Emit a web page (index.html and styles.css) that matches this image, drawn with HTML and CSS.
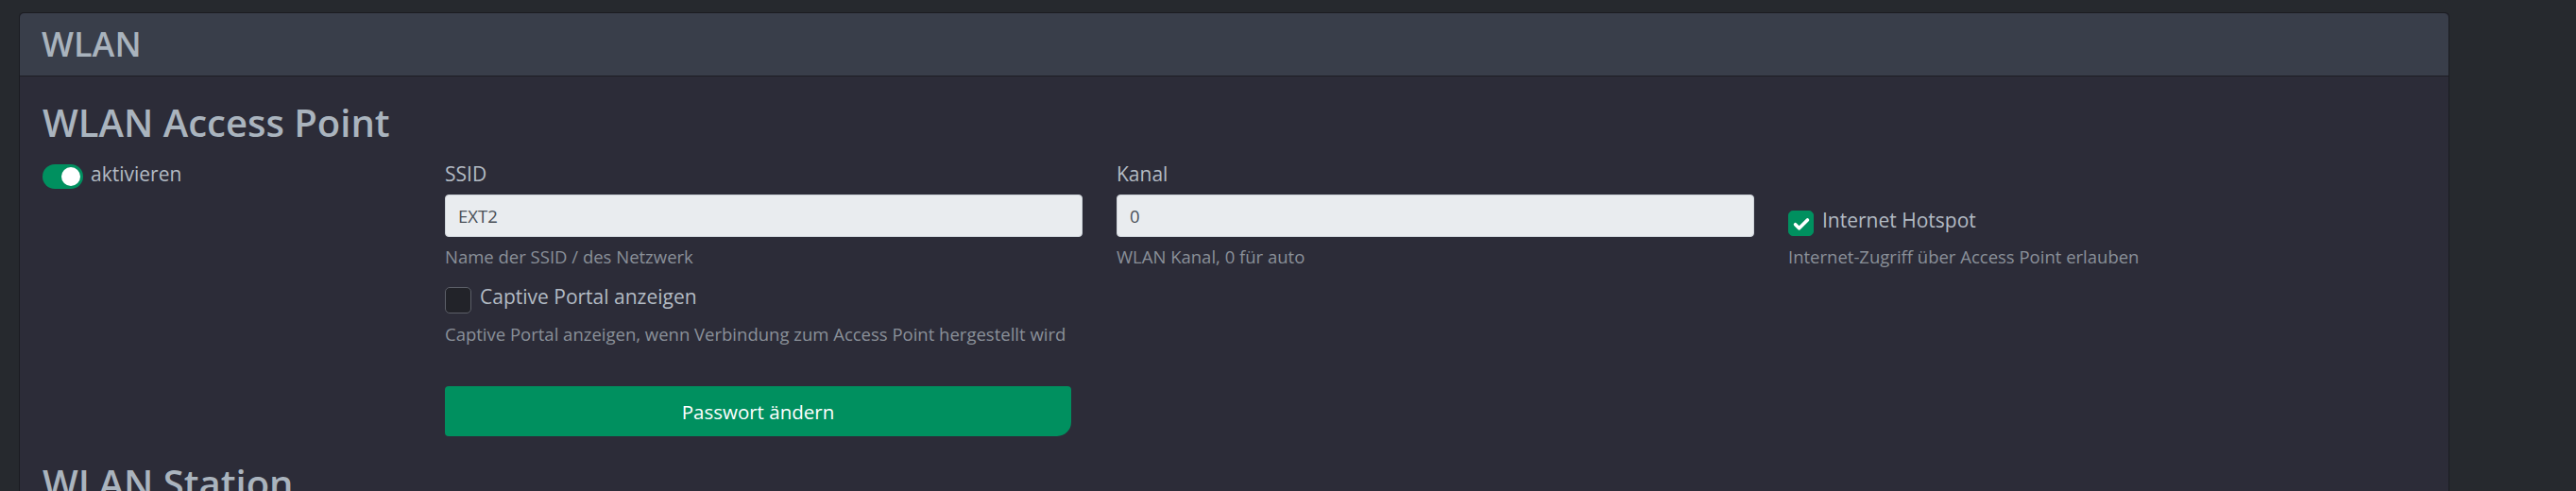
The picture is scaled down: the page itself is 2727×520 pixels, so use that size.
FILE: index.html
```html
<!DOCTYPE html>
<html lang="de">

<head>
    <meta charset="UTF-8">
    <meta name="viewport" content="width=device-width, initial-scale=1.0">
    <title>WLAN</title>
    <link rel="stylesheet" href="styles.css">
</head>

<body>
    <div class="card">
        <div class="card-header">WLAN</div>
        <div class="card-body">
            <h2 class="section-title">WLAN Access Point</h2>
            <div class="form-row">
                <div class="col">
                    <label class="switch">
                        <span class="switch-track"><span class="switch-knob"></span></span>
                        <span class="switch-text">aktivieren</span>
                    </label>
                </div>
                <div class="col">
                    <label class="field-label" for="ssid">SSID</label>
                    <input class="field-input" id="ssid" type="text" value="EXT2">
                    <div class="help">Name der SSID / des Netzwerk</div>

                    <label class="check">
                        <span class="check-box"></span>
                        <span class="check-text">Captive Portal anzeigen</span>
                    </label>
                    <div class="help help-tight">Captive Portal anzeigen, wenn Verbindung zum Access Point hergestellt wird</div>

                    <button class="btn-green" type="button">Passwort ändern</button>
                </div>
                <div class="col">
                    <label class="field-label" for="kanal">Kanal</label>
                    <input class="field-input" id="kanal" type="text" value="0">
                    <div class="help">WLAN Kanal, 0 für auto</div>
                </div>
                <div class="col col-offset">
                    <label class="check">
                        <span class="check-box checked">
                            <svg viewBox="0 0 24 24" width="22" height="22"><path d="M5 12.8l4.4 4.4L19 7.6" fill="none" stroke="#fff" stroke-width="4" stroke-linecap="round" stroke-linejoin="round"/></svg>
                        </span>
                        <span class="check-text">Internet Hotspot</span>
                    </label>
                    <div class="help help-tight">Internet-Zugriff über Access Point erlauben</div>
                </div>
            </div>
            <h2 class="section-title next">WLAN Station</h2>
        </div>
    </div>
</body>

</html>
```

FILE: styles.css
```css
body {
    margin: 0;
    background-color: #26292e;
    font-family: "Open Sans", "Noto Sans", sans-serif;
    color: #adb5bd;
    overflow: hidden;
    height: 520px;
}
.card {
    margin: 13px 0 0 20px;
    width: 2573px;
    box-sizing: border-box;
    border: 1px solid #1b1c21;
    border-bottom: none;
    border-radius: 5px 5px 0 0;
    background-color: #2c2c38;
}
.card-header {
    background-color: #393e4a;
    border-bottom: 1px solid #1d1e24;
    border-radius: 5px 5px 0 0;
    padding: 0 23px;
    height: 66px;
    line-height: 66px;
    font-size: 36px;
    font-weight: 600;
    color: #a9b3bd;
}
.card-body {
    padding: 24px 24px 0 24px;
}
.section-title {
    margin: 0 0 14px 0;
    font-size: 40px;
    font-weight: 600;
    line-height: 50px;
    color: #aab4be;
}
.section-title.next {
    margin-top: 25px;
}
.form-row {
    display: grid;
    grid-template-columns: 390px 1fr 1fr 1fr;
    column-gap: 36px;
}
.switch {
    display: flex;
    align-items: flex-start;
    gap: 8px;
}
.switch-track {
    width: 43px;
    height: 26px;
    margin-top: 5px;
    border-radius: 13px;
    background-color: #00905f;
    display: flex;
    align-items: center;
    justify-content: flex-end;
    padding-right: 3px;
    box-sizing: border-box;
}
.switch-knob {
    width: 20px;
    height: 20px;
    border-radius: 50%;
    background-color: #fff;
}
.switch-text {
    font-size: 21px;
    line-height: 31px;
    color: #b3bbc4;
}
.field-label {
    display: block;
    font-size: 21px;
    line-height: 31px;
    margin-bottom: 6px;
    color: #b3bbc4;
}
.field-input {
    display: block;
    width: 100%;
    height: 45px;
    box-sizing: border-box;
    border: 1px solid #ced4da;
    border-radius: 4px;
    background-color: #e9ecef;
    padding: 0 13px;
    font-family: inherit;
    font-size: 18.5px;
    color: #495057;
}
.help {
    font-size: 18.5px;
    line-height: 27px;
    margin-top: 7px;
    color: #8a9099;
}
.help-tight {
    margin-top: 8px;
}
.check {
    display: flex;
    align-items: flex-start;
    gap: 9px;
    margin-top: 12px;
}
.check-box {
    width: 28px;
    height: 28px;
    margin-top: 7px;
    box-sizing: border-box;
    border: 1px solid #5c5f68;
    border-radius: 5px;
    background-color: #222329;
    display: flex;
    align-items: center;
    justify-content: center;
}
.check-box.checked {
    width: 27px;
    height: 27px;
    border-color: #00905f;
    background-color: #00905f;
}
.check-text {
    font-size: 21px;
    line-height: 34px;
    color: #b3bbc4;
}
.col-offset {
    padding-top: 35px;
}
.btn-green {
    display: block;
    width: calc(100% - 12px);
    height: 53px;
    margin-top: 42px;
    border: none;
    border-radius: 4px 4px 15px 4px;
    background-color: #00905f;
    color: #fff;
    font-family: inherit;
    font-size: 20.5px;
}
```
